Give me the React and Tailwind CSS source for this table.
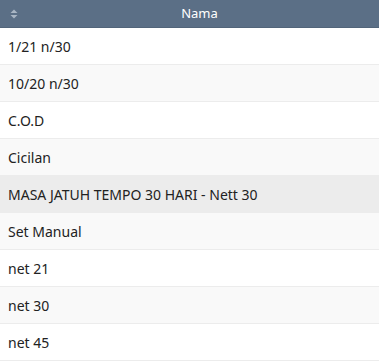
import React from "react";

const rows = [
  "1/21 n/30",
  "10/20 n/30",
  "C.O.D",
  "Cicilan",
  "MASA JATUH TEMPO 30 HARI - Nett 30",
  "Set Manual",
  "net 21",
  "net 30",
  "net 45",
];

function SortIcon() {
  return (
    <svg width="8" height="10" viewBox="0 0 8 10" className="text-[#a9b6c4]">
      <path d="M4 0.5 L7.5 4 L0.5 4 Z" fill="currentColor" />
      <path d="M4 9.5 L7.5 6 L0.5 6 Z" fill="currentColor" />
    </svg>
  );
}

export default function App() {
  return (
    <div className="w-[379px] h-[361px] overflow-hidden bg-white font-['Noto_Sans',sans-serif]">
      <div className="flex h-[28px] items-center bg-[#5b6f86] border-b border-[#52657a] text-white">
        <div className="flex w-[20px] justify-end pr-[2px]">
          <SortIcon />
        </div>
        <div className="flex-1 text-center text-[13px] leading-none">Nama</div>
      </div>
      {rows.map((r, i) => (
        <div
          key={r}
          className={`flex h-[37px] items-center border-b border-[#ececec] pl-[8px] text-[14px] text-[#222] ${
            i === 4 ? "bg-[#ececec]" : i % 2 === 1 ? "bg-[#f9f9f9]" : "bg-white"
          }`}
        >
          {r}
        </div>
      ))}
    </div>
  );
}
